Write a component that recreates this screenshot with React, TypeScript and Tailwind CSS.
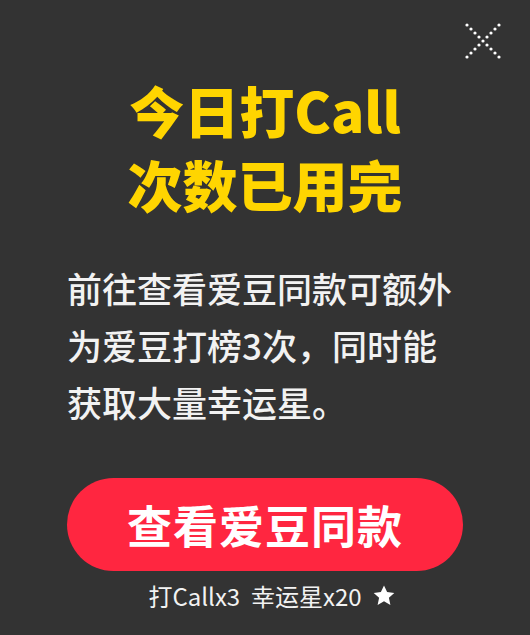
import React from "react";

function DotClose() {
  const dots: { x: number; y: number }[] = [];
  for (let i = 0; i <= 8; i++) {
    dots.push({ x: 2 + i * 4, y: 2 + i * 4 });
    if (i !== 4) dots.push({ x: 34 - i * 4, y: 2 + i * 4 });
  }
  return (
    <svg width="36" height="36" viewBox="0 0 36 36">
      {dots.map((d, i) => (
        <circle key={i} cx={d.x} cy={d.y} r="1.6" fill="#ffffff" />
      ))}
    </svg>
  );
}

export default function App() {
  return (
    <div
      className="relative w-[530px] h-[635px] bg-[#333333] flex flex-col items-center overflow-hidden"
      style={{ fontFamily: '"Noto Sans CJK SC", "Noto Sans", sans-serif' }}
    >
      <button className="absolute right-[29px] top-[23px]">
        <DotClose />
      </button>

      <h1 className="mt-[72px] text-center text-[55px] leading-[74px] font-black text-[#ffd500]">
        今日打Call
        <br />
        次数已用完
      </h1>

      <p className="mt-[39px] w-[396px] text-[35px] leading-[57px] font-medium text-[#f2f2f2] whitespace-nowrap">
        前往查看爱豆同款可额外
        <br />
        为爱豆打榜3次，同时能
        <br />
        获取大量幸运星。
      </p>

      <button className="mt-[48px] w-[396px] h-[93px] rounded-full bg-[#ff2640] text-white text-[45px] font-bold tracking-[1px]">
        查看爱豆同款
      </button>

      <div className="mt-[8px] ml-[14px] flex items-center gap-[10px] text-[24px] leading-[34px] text-[#f2f2f2]">
        <span>打Callx3&nbsp;&nbsp;幸运星x20</span>
        <svg width="24" height="24" viewBox="0 0 24 24">
          <path
            d="M12 1.5l3.1 6.6 7.2.8-5.4 4.9 1.5 7.1L12 17.3l-6.4 3.6 1.5-7.1L1.7 8.9l7.2-.8z"
            fill="#ffffff"
          />
        </svg>
      </div>
    </div>
  );
}
